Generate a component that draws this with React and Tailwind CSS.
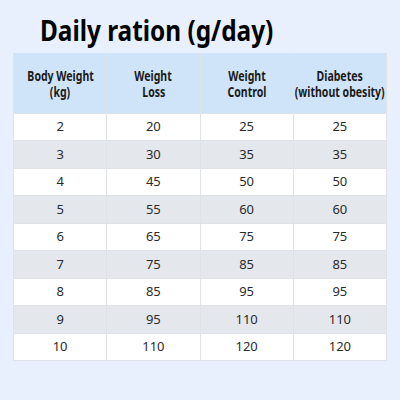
import React from 'react';

const rows = [
  [2, 20, 25, 25],
  [3, 30, 35, 35],
  [4, 45, 50, 50],
  [5, 55, 60, 60],
  [6, 65, 75, 75],
  [7, 75, 85, 85],
  [8, 85, 95, 95],
  [9, 95, 110, 110],
  [10, 110, 120, 120],
];

const headers = [
  ['Body Weight', '(kg)'],
  ['Weight', 'Loss'],
  ['Weight', 'Control'],
  ['Diabetes', '(without obesity)'],
];

export default function App() {
  return (
    <div className="w-[400px] h-[400px] bg-[#e7f0fc] px-[13px] pt-[12px] font-['Noto_Sans',sans-serif]">
      <h1 className="pl-[27px] h-[36px] text-[28px] leading-[36px] font-bold text-black whitespace-nowrap">
        <span className="inline-block origin-left scale-x-[0.87]">Daily ration (g/day)</span>
      </h1>
      <table className="mt-[5px] w-[374px] table-fixed border-collapse">
        <thead>
          <tr className="h-[60px] bg-[#cfe4f8]">
            {headers.map((h, i) => (
              <th
                key={i}
                className="border-x border-[#dfe3e8] p-0 pt-[4px] text-[13.5px] leading-[15.5px] font-bold text-[#1a1a1a]"
              >
                <div className="flex flex-col items-center">
                  {h.map((line) => (
                    <span key={line} className="whitespace-nowrap scale-x-[0.78]">
                      {line}
                    </span>
                  ))}
                </div>
              </th>
            ))}
          </tr>
        </thead>
        <tbody>
          {rows.map((r, i) => (
            <tr key={i} className={`h-[27.5px] ${i % 2 ? 'bg-[#e4e7eb]' : 'bg-white'}`}>
              {r.map((v, j) => (
                <td key={j} className="border border-[#dfe3e8] text-center text-[13px] text-[#2b2b2b]">
                  {v}
                </td>
              ))}
            </tr>
          ))}
        </tbody>
      </table>
    </div>
  );
}
